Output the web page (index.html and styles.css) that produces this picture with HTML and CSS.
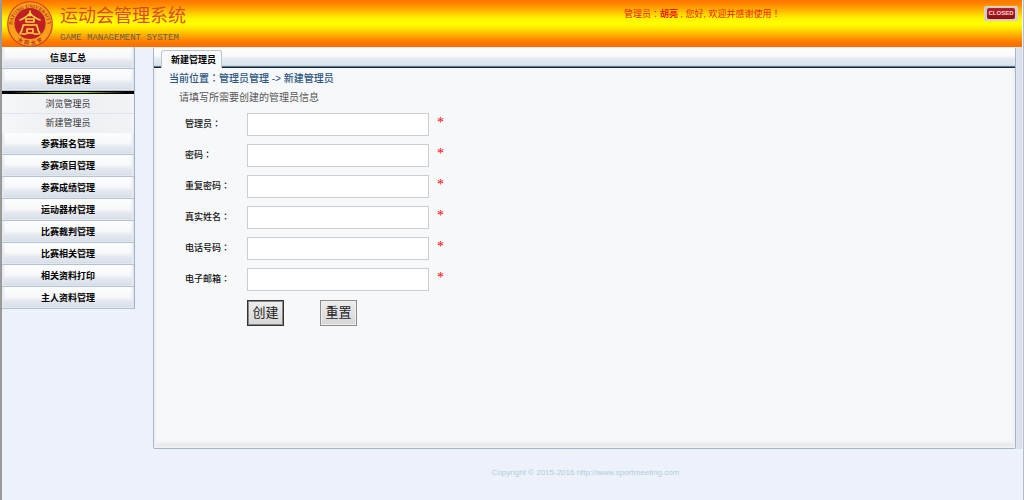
FILE: index.html
```html
<!DOCTYPE html>
<html lang="zh-CN">
<head>
<meta charset="utf-8">
<title>运动会管理系统</title>
<link rel="stylesheet" href="styles.css">
</head>
<body>
<div class="page">
  <header class="header">
    <svg class="logo" viewBox="0 0 48 48" role="img" aria-label="Datong University">
      <defs>
        <path id="ring-top" d="M7.5 31.5 A17.6 17.6 0 1 1 40.5 31.5"/>
        <path id="ring-bottom" d="M6 35 A21.4 21.4 0 0 0 42 35"/>
      </defs>
      <circle cx="24" cy="24" r="22.3" fill="#f8a01c" stroke="#d23b1c" stroke-width="1.1"/>
      <circle cx="24" cy="23.5" r="15.6" fill="#c01f25"/>
      <text class="ring-text"><textPath href="#ring-top" startOffset="50%" text-anchor="middle">DATONG UNIVERSITY</textPath></text>
      <text class="ring-name"><textPath href="#ring-bottom" startOffset="50%" text-anchor="middle">大  同  大  学</textPath></text>
      <g fill="none" stroke="#ffd23c" stroke-width="1.6" stroke-linecap="round" stroke-linejoin="round">
        <path d="M24 11v5M24 13q-4 5-10 7M24 13q4 5 10 7M20 19h8v3h-8zM17 26q-1 5-3 8M17 25h14M31 26q1 5 3 8M21 29h6v4h-6zM16 34h4M28 34h4"/>
      </g>
    </svg>
    <div class="brand">
      <h1 class="brand-title">运动会管理系统</h1>
      <p class="brand-sub">GAME MANAGEMENT SYSTEM</p>
    </div>
    <p class="welcome">管理员<span class="colon" lang="zh-TW">：</span><b>胡亮</b> , 您好, 欢迎并感谢使用<span class="colon" lang="zh-TW">！</span></p>
    <button class="close" type="button"><span>CLOSED</span></button>
  </header>

  <div class="body">
    <nav class="menu">
      <a class="menu-item" href="#">信息汇总</a>
      <a class="menu-item" href="#">管理员管理</a>
      <div class="submenu">
        <a class="submenu-item" href="#">浏览管理员</a>
        <a class="submenu-item" href="#">新建管理员</a>
      </div>
      <a class="menu-item" href="#">参赛报名管理</a>
      <a class="menu-item" href="#">参赛项目管理</a>
      <a class="menu-item" href="#">参赛成绩管理</a>
      <a class="menu-item" href="#">运动器材管理</a>
      <a class="menu-item" href="#">比赛裁判管理</a>
      <a class="menu-item" href="#">比赛相关管理</a>
      <a class="menu-item" href="#">相关资料打印</a>
      <a class="menu-item" href="#">主人资料管理</a>
    </nav>

    <main class="content">
      <div class="panel">
        <div class="tabs"><a class="tab" href="#">新建管理员</a></div>
        <div class="panel-body">
          <p class="crumbs">当前位置<span class="colon" lang="zh-TW">：</span>管理员管理 -&gt; 新建管理员</p>
          <p class="hint">请填写所需要创建的管理员信息</p>
          <form class="form">
            <div class="row"><label for="admin">管理员<span class="colon" lang="zh-TW">：</span></label><input id="admin" type="text"><span class="star">*</span></div>
            <div class="row"><label for="pwd">密码<span class="colon" lang="zh-TW">：</span></label><input id="pwd" type="password"><span class="star">*</span></div>
            <div class="row"><label for="pwd2">重复密码<span class="colon" lang="zh-TW">：</span></label><input id="pwd2" type="password"><span class="star">*</span></div>
            <div class="row"><label for="name">真实姓名<span class="colon" lang="zh-TW">：</span></label><input id="name" type="text"><span class="star">*</span></div>
            <div class="row"><label for="phone">电话号码<span class="colon" lang="zh-TW">：</span></label><input id="phone" type="tel"><span class="star">*</span></div>
            <div class="row"><label for="mail">电子邮箱<span class="colon" lang="zh-TW">：</span></label><input id="mail" type="email"><span class="star">*</span></div>
            <div class="actions">
              <button class="btn btn-default" type="submit">创建</button>
              <button class="btn" type="reset">重置</button>
            </div>
          </form>
        </div>
      </div>
    </main>
  </div>
  <footer class="footer">Copyright © 2015-2016 http://www.sportmeeting.com</footer>
</div>
</body>
</html>
```
FILE: styles.css
```css
* { box-sizing: border-box; }
body {
  margin: 0;
  background: #edf1fa;
  font-family: "Liberation Sans", "Noto Sans CJK SC", sans-serif;
  font-size: 9px;
  color: #222;
}
h1, p { margin: 0; font-weight: normal; }
a { text-decoration: none; color: inherit; }
.colon { font-family: "Noto Sans CJK TC", sans-serif; line-height: 1; }

.page {
  display: flex;
  flex-direction: column;
  min-height: 100vh;
  border-left: 2px solid #999;
  border-right: 1px solid #b4bdcc;
  padding-right: 1px;
}

.header {
  display: flex;
  align-items: flex-start;
  height: 47px;
  padding-left: 4px;
  padding-right: 4px;
  background: linear-gradient(#ff7300 0, #ff8c00 5px, #fff000 18px, #ffff00 24px, #ffe800 28px, #ff7e00 41px, #ff6a00 47px);
}
.logo { width: 48px; height: 48px; flex: none; }
.ring-text { font: bold 5px "Liberation Serif", serif; fill: #b3361c; }
.ring-name { font: bold 5px "Noto Sans CJK SC", sans-serif; fill: #c01f25; white-space: pre; }
.brand { flex: 0 1 567px; padding-top: 4px; padding-left: 6px; }
.brand-title { font-size: 18px; line-height: 24px; color: #dc4a28; white-space: nowrap; }
.brand-sub { margin-top: 4px; font: 9px/12px "Liberation Mono", monospace; color: #665c40; white-space: nowrap; }
.welcome { flex: 1; padding-top: 7px; padding-left: 3px; line-height: 14px; color: #f01c00; white-space: nowrap; }
.close {
  width: 34px;
  height: 15px;
  margin-top: 6px;
  padding: 1px 2px;
  border: 1px solid #d9d2c8;
  border-radius: 2px;
  background: #d0ccca;
}
.close span {
  display: block;
  border-radius: 2px;
  background: linear-gradient(#b5202a, #920c14);
  color: #f5dede;
  font: bold 6px/11px "Liberation Sans", sans-serif;
}

.body { display: flex; flex: 1; align-items: stretch; }

.menu {
  width: 133px;
  flex: none;
  align-self: flex-start;
  border-right: 1px solid #9fb0c2;
  text-align: center;
}
.menu-item {
  display: block;
  height: 22px;
  line-height: 22px;
  border-bottom: 1px solid #b4c3d2;
  background: linear-gradient(#fdfdfd 0, #f7f8fa 10px, #e4e8ef 14px, #dce1ea 19px, #c6d2de 19px, #e3e9f0 20px);
  box-shadow: inset 3px 0 2px -1px #e4e8ef, inset -3px 0 2px -1px #e4e8ef;
  font-weight: bold;
  color: #000;
}
.submenu {
  padding-top: 3px;
  background:
    linear-gradient(90deg, #000 5%, #a8dc00 40%, #a8dc00 60%, #000 95%) 0 1px / 100% 1px no-repeat,
    linear-gradient(#000, #000) top / 100% 3px no-repeat,
    linear-gradient(90deg, #f5f6f9, #eceff3 50%, #f1f3f6);
}
.submenu-item { display: block; height: 20px; line-height: 20px; border-bottom: 1px solid #e0e4e9; color: #333; }
.submenu-item + .submenu-item { height: 19px; line-height: 18px; border-bottom: 0; }

.content {
  flex: 1;
  display: flex;
  margin-left: 18px;
  padding-right: 6px;
  background: linear-gradient(90deg, #dfe4ee, #d9dde8) right / 6px 100% no-repeat;
}
.panel {
  flex: 1;
  display: flex;
  flex-direction: column;
  border: 1px solid #a5b4c6;
  border-top-color: #e3e9ef;
  border-radius: 2px;
  background: #f7f8fa;
}
.tabs {
  height: 20px;
  padding: 2px 7px 0;
  background: linear-gradient(#fdfdfd 0, #fafbfc 8px, #e5ecf2 10px, #dce5ed 17px, #b6cbd9 18px, #12293a 19px);
}
.tab {
  display: inline-block;
  height: 18px;
  padding: 0 5px 0 9px;
  border: 1px solid #bcc6cf;
  border-bottom: 0;
  border-radius: 3px 3px 0 0;
  background: #f8f9fb;
  font-weight: bold;
  line-height: 19px;
  color: #000;
  white-space: nowrap;
}
.panel-body {
  flex: 1;
  padding: 4px 15px 16px;
  border: 2px solid #edf0f4;
  border-top: 0;
  background: linear-gradient(transparent, #e4e8ea) bottom / 100% 6px no-repeat;
}
.crumbs { margin-left: -2px; font-size: 10px; line-height: 14px; font-weight: 500; color: #2a5580; }
.hint { margin-top: 5px; padding-left: 8px; font-size: 10px; line-height: 14px; color: #555; }
.form { margin-top: 8px; padding-left: 14px; }
.row { display: flex; align-items: center; margin-bottom: 8px; }
.row label { width: 62px; padding-bottom: 2px; line-height: 14px; font-weight: 500; color: #111; }
.row input {
  width: 182px;
  height: 23px;
  padding: 2px 4px;
  border: 1px solid #cbced1;
  background: #fff;
  font: 12px "Liberation Sans", sans-serif;
}
.star { margin-left: 8px; padding-bottom: 3px; font: 14px/14px "Liberation Serif", serif; color: #f00; }
.actions { display: flex; gap: 36px; margin-top: 9px; padding-left: 62px; }
.btn {
  width: 37px;
  height: 26px;
  padding: 0 4px;
  border: 1px solid #8c8c8c;
  background: linear-gradient(#ededed, #d6d6d6);
  box-shadow: inset 0 0 0 1px #f0f0f0;
  font: 13px/20px "Liberation Sans", "Noto Sans CJK SC", sans-serif;
  color: #222;
}
.btn-default { border-color: #333; box-shadow: inset 0 0 0 1px #888; }

.footer {
  padding: 17px 0 20px 147px;
  font-size: 8px;
  line-height: 14px;
  text-align: center;
  color: #b0cdda;
}
```
